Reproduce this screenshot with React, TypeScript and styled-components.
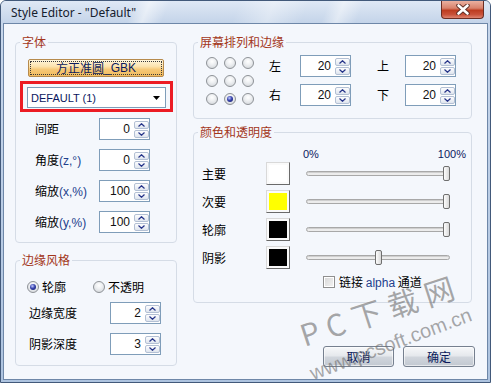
import React from "react";
import styled, { createGlobalStyle } from "styled-components";

const CJK = `"Noto Sans CJK SC", "Noto Sans", sans-serif`;
const LATIN = `"Liberation Sans", "Noto Sans CJK SC", sans-serif`;

const GlobalStyle = createGlobalStyle`
  html, body {
    margin: 0;
    padding: 0;
    background: #ffffff;
  }
  body {
    width: 491px;
    height: 383px;
    overflow: hidden;
    font-family: ${CJK};
  }
`;

// window chrome
const Frame = styled.div`
  position: relative;
  box-sizing: border-box;
  width: 491px;
  height: 383px;
  display: flex;
  flex-direction: column;
  padding: 0 2px 2px;
  border: 1px solid #42597a;
  border-radius: 6px 6px 0 0;
  background: linear-gradient(#c9d8ec, #adc3df);
  overflow: hidden;
`;

const TitleBar = styled.div`
  height: 22px;
  margin: 0 -2px;
  padding: 0 6px 0 10px;
  display: flex;
  justify-content: space-between;
  align-items: flex-start;
  background:
    linear-gradient(
      112deg,
      transparent 0 27%,
      rgba(255, 255, 255, 0.5) 30%,
      transparent 34%,
      transparent 48%,
      rgba(255, 255, 255, 0.35) 55%,
      transparent 62%,
      transparent 66%,
      rgba(255, 255, 255, 0.45) 69%,
      transparent 73%
    ),
    linear-gradient(#dfe8f5, #c4d4e9);
`;

const Title = styled.span`
  padding-top: 4px;
  font: 12px/16px "Noto Sans", sans-serif;
  color: #15202e;
`;

const CloseButton = styled.div`
  box-sizing: border-box;
  width: 43px;
  height: 18px;
  border: 1px solid #6b2d23;
  border-top: none;
  border-radius: 0 0 4px 4px;
  background: linear-gradient(#eab0a0 0%, #d8826c 42%, #bd3c20 55%, #c9523a 80%, #de8470 100%);
  display: flex;
  align-items: center;
  justify-content: center;
`;

const Client = styled.div`
  flex: 1;
  min-height: 0;
  display: flex;
  gap: 16px;
  padding: 11px 12px 12px 11px;
  border: 1px solid #6e87a8;
  background: #f4f7fc;
`;

const Column = styled.div<{ $width?: number }>`
  display: flex;
  flex-direction: column;
  width: ${(p) => (p.$width ? `${p.$width}px` : "auto")};
  flex: ${(p) => (p.$width ? "none" : "1")};
`;

// group boxes
const Group = styled.fieldset<{ $gap?: number; $right?: number }>`
  margin: ${(p) => p.$gap ?? 0}px ${(p) => p.$right ?? 0}px 0 0;
  padding: 0;
  min-width: 0;
  border: 1px solid #d5dce6;
  border-radius: 4px;
`;

const Legend = styled.legend`
  margin-left: 4px;
  padding: 0 2px;
  font: 12px/14px ${CJK};
  color: #a3361a;
`;

const Body = styled.div<{ $pad: string }>`
  padding: ${(p) => p.$pad};
  display: flex;
  flex-direction: column;
`;

const Latin = styled.span`
  font-family: ${LATIN};
  color: #22408c;
`;

// font group
const FontButton = styled.div`
  position: relative;
  box-sizing: border-box;
  width: 136px;
  height: 18px;
  margin-left: 12px;
  border: 1px solid #b68a4c;
  border-radius: 2px;
  background: linear-gradient(#fff6dd 0%, #fce3ae 40%, #f6c877 60%, #f1bb5e 100%);
  display: flex;
  align-items: center;
  justify-content: center;
  font: 12px/16px ${CJK};
  color: #0b1b5e;

  &::after {
    content: "";
    position: absolute;
    inset: 1px;
    border: 1px dotted #3a3a3a;
  }
`;

const Highlight = styled.div`
  box-sizing: border-box;
  width: 153px;
  height: 31px;
  margin: 4px 0 0 4px;
  padding: 3px 4px 1px;
  border: 3px solid #ec1c24;
`;

const Combo = styled.div`
  box-sizing: border-box;
  height: 21px;
  padding: 0 5px 0 3px;
  border: 1px solid #7f9db9;
  background: #ffffff;
  display: flex;
  align-items: center;
  justify-content: space-between;
  font: 11px/14px ${LATIN};
  color: #0b1760;
`;

const FieldRow = styled.div<{ $indent: number; $top: number }>`
  display: flex;
  align-items: center;
  margin: ${(p) => p.$top}px 0 0 ${(p) => p.$indent}px;
`;

const FieldLabel = styled.span<{ $width: number }>`
  width: ${(p) => p.$width}px;
  flex: none;
  font: 12px/16px ${CJK};
  color: #000000;
  white-space: nowrap;
`;

// spin boxes
const SpinFrame = styled.div`
  box-sizing: border-box;
  width: 51px;
  height: 22px;
  display: flex;
  border: 1px solid #7f9db9;
  background: #ffffff;
`;

const SpinValue = styled.span`
  flex: 1;
  padding-right: 4px;
  text-align: right;
  font: 12px/20px ${LATIN};
  color: #111111;
`;

const SpinButtons = styled.div`
  width: 15px;
  padding: 2px 0 1px;
  display: flex;
  flex-direction: column;
  gap: 1px;
`;

const SpinButton = styled.div`
  box-sizing: border-box;
  height: 8px;
  border: 1px solid #b3c0d4;
  border-radius: 2px;
  background: linear-gradient(#fdfdfe, #dfe5ee);
  display: flex;
  align-items: center;
  justify-content: center;
`;

const Chevron = ({ up }: { up?: boolean }) => (
  <svg width="7" height="4" viewBox="0 0 7 4">
    <polyline
      points={up ? "0.5,3.5 3.5,0.7 6.5,3.5" : "0.5,0.5 3.5,3.3 6.5,0.5"}
      fill="none"
      stroke="#28368a"
      strokeWidth="1.2"
    />
  </svg>
);

const Spin = ({ value }: { value: number }) => (
  <SpinFrame>
    <SpinValue>{value}</SpinValue>
    <SpinButtons>
      <SpinButton>
        <Chevron up />
      </SpinButton>
      <SpinButton>
        <Chevron />
      </SpinButton>
    </SpinButtons>
  </SpinFrame>
);

// radios and checkbox
const RadioDot = styled.span<{ $on?: boolean }>`
  box-sizing: border-box;
  width: 12px;
  height: 12px;
  flex: none;
  border-radius: 50%;
  border: 1px solid #8e9297;
  background: radial-gradient(circle at 50% 35%, #ffffff 0, #eef0f2 40%, #cdd1d6 100%);
  display: inline-flex;
  align-items: center;
  justify-content: center;

  &::after {
    content: "";
    display: ${(p) => (p.$on ? "block" : "none")};
    width: 6px;
    height: 6px;
    border-radius: 50%;
    background: radial-gradient(circle at 40% 35%, #c3cbff 0, #3743ad 45%, #10175e 100%);
  }
`;

const RadioOption = styled.label<{ $width?: number }>`
  display: flex;
  align-items: center;
  gap: 3px;
  width: ${(p) => (p.$width ? `${p.$width}px` : "auto")};
  font: 12px/14px ${CJK};
  color: #000000;
`;

const RadioGrid = styled.div`
  display: grid;
  grid-template-columns: repeat(3, 12px);
  gap: 6px;
  margin-top: 2px;
  align-self: flex-start;
`;

const CheckBox = styled.span`
  box-sizing: border-box;
  width: 12px;
  height: 12px;
  flex: none;
  border: 1px solid #8f8f8f;
  background: linear-gradient(135deg, #d6d6d6, #f4f4f4);
  box-shadow: inset 0 0 0 1px #ffffff;
`;

// screen margins group
const MarginsRow = styled.div`
  display: flex;
  padding: 6px 0 12px 12px;
  gap: 15px;
`;

const MarginGrid = styled.div`
  display: flex;
  flex-direction: column;
  gap: 7px;
`;

const MarginPair = styled.div`
  display: flex;
  gap: 26px;
`;

// colour group
const PercentHeader = styled.div`
  display: flex;
  justify-content: space-between;
  margin: 0 5px 0 109px;
  font: 11px/12px ${LATIN};
  color: #0b1760;
`;

const ColorRow = styled.div<{ $top: number }>`
  display: flex;
  align-items: center;
  height: 23px;
  margin-top: ${(p) => p.$top}px;
  padding-left: 8px;
`;

const Swatch = styled.div<{ $color: string }>`
  box-sizing: border-box;
  width: 24px;
  height: 23px;
  flex: none;
  padding: 2px;
  border: 1px solid;
  border-color: #d9d9d9 #6a6a6a #6a6a6a #d9d9d9;
  background: #fafafa;

  &::before {
    content: "";
    display: block;
    width: 100%;
    height: 100%;
    background: ${(p) => p.$color};
  }
`;

const Slider = styled.div`
  position: relative;
  width: 144px;
  height: 23px;
  margin-left: 16px;
  display: flex;
  align-items: center;
`;

const Track = styled.div`
  box-sizing: border-box;
  width: 100%;
  height: 5px;
  border: 1px solid #a8a8a8;
  border-radius: 3px;
  background: #ececec;
  box-shadow: inset 0 1px 0 #cfcfcf;
`;

const Thumb = styled.div`
  position: absolute;
  top: 4px;
  box-sizing: border-box;
  width: 7px;
  height: 15px;
  border: 1px solid #6f6f6f;
  border-radius: 2px;
  background: linear-gradient(to right, #fdfdfd, #d9d9d9);
`;

const CheckRow = styled.label`
  display: flex;
  align-items: center;
  gap: 4px;
  margin-top: 7px;
  padding-left: 129px;
  height: 12px;
  font: 12px/14px ${CJK};
  color: #000000;
`;

// dialog buttons
const ButtonRow = styled.div`
  margin-top: auto;
  display: flex;
  justify-content: flex-end;
  gap: 9px;
`;

const DialogButton = styled.div<{ $width: number }>`
  box-sizing: border-box;
  width: ${(p) => p.$width}px;
  height: 21px;
  border: 1px solid #76808f;
  border-radius: 3px;
  background: linear-gradient(#f7f8fa 0%, #e6e9ed 45%, #d0d5dc 55%, #c2c8d1 100%);
  box-shadow: inset 0 0 0 1px rgba(255, 255, 255, 0.6);
  display: flex;
  align-items: center;
  justify-content: center;
  font: 12px/16px ${CJK};
  color: #0c1a5c;
`;

// watermark drawn over the dialog
const Watermark = styled.div<{ $left: number; $top: number; $angle: number; $size: number }>`
  position: absolute;
  left: ${(p) => p.$left}px;
  top: ${(p) => p.$top}px;
  transform: rotate(${(p) => p.$angle}deg);
  transform-origin: 0 100%;
  font-size: ${(p) => p.$size}px;
  line-height: 1;
  white-space: nowrap;
  color: rgba(110, 110, 110, 0.6);
  pointer-events: none;
`;

const fontRows = [
  { label: "间距", unit: "", value: 0 },
  { label: "角度", unit: "(z,°)", value: 0 },
  { label: "缩放", unit: "(x,%)", value: 100 },
  { label: "缩放", unit: "(y,%)", value: 100 },
];

const colorRows = [
  { label: "主要", color: "#ffffff", alpha: 1 },
  { label: "次要", color: "#ffff00", alpha: 1 },
  { label: "轮廓", color: "#000000", alpha: 1 },
  { label: "阴影", color: "#000000", alpha: 0.5 },
];

const App = () => {
  return (
    <>
      <GlobalStyle />
      <Frame>
        <TitleBar>
          <Title>Style Editor - "Default"</Title>
          <CloseButton>
            <svg width="14" height="11" viewBox="0 0 14 11">
              <path d="M2.5 1.5 L11.5 9.5 M11.5 1.5 L2.5 9.5" stroke="#5b2c24" strokeWidth="4.4" strokeLinecap="round" />
              <path d="M2.5 1.5 L11.5 9.5 M11.5 1.5 L2.5 9.5" stroke="#ffffff" strokeWidth="2.6" strokeLinecap="round" />
            </svg>
          </CloseButton>
        </TitleBar>

        <Client>
          <Column $width={162}>
            <Group>
              <Legend>字体</Legend>
              <Body $pad="10px 0 9px">
                <FontButton>
                  方正准圆<span style={{ fontFamily: LATIN }}>_GBK</span>
                </FontButton>
                <Highlight>
                  <Combo>
                    <span>DEFAULT (1)</span>
                    <svg width="7" height="4" viewBox="0 0 7 4">
                      <polygon points="0,0 7,0 3.5,4" fill="#000" />
                    </svg>
                  </Combo>
                </Highlight>
                {fontRows.map((row, i) => (
                  <FieldRow key={i} $indent={19} $top={i === 0 ? 6 : 9}>
                    <FieldLabel $width={64}>
                      {row.label}
                      {row.unit && <Latin>{row.unit}</Latin>}
                    </FieldLabel>
                    <Spin value={row.value} />
                  </FieldRow>
                ))}
              </Body>
            </Group>

            <Group $gap={10}>
              <Legend>边缘风格</Legend>
              <Body $pad="13px 0 10px">
                <FieldRow $indent={11} $top={0}>
                  <RadioOption $width={66}>
                    <RadioDot $on />
                    轮廓
                  </RadioOption>
                  <RadioOption>
                    <RadioDot />
                    不透明
                  </RadioOption>
                </FieldRow>
                <FieldRow $indent={13} $top={8}>
                  <FieldLabel $width={81}>边缘宽度</FieldLabel>
                  <Spin value={2} />
                </FieldRow>
                <FieldRow $indent={13} $top={9}>
                  <FieldLabel $width={81}>阴影深度</FieldLabel>
                  <Spin value={3} />
                </FieldRow>
              </Body>
            </Group>
          </Column>

          <Column>
            <Group $right={3}>
              <Legend>屏幕排列和边缘</Legend>
              <MarginsRow>
                <RadioGrid>
                  {Array.from({ length: 9 }).map((_, i) => (
                    <RadioDot key={i} $on={i === 7} />
                  ))}
                </RadioGrid>
                <MarginGrid>
                  <MarginPair>
                    <FieldRow $indent={0} $top={0}>
                      <FieldLabel $width={31}>左</FieldLabel>
                      <Spin value={20} />
                    </FieldRow>
                    <FieldRow $indent={0} $top={0}>
                      <FieldLabel $width={28}>上</FieldLabel>
                      <Spin value={20} />
                    </FieldRow>
                  </MarginPair>
                  <MarginPair>
                    <FieldRow $indent={0} $top={0}>
                      <FieldLabel $width={31}>右</FieldLabel>
                      <Spin value={20} />
                    </FieldRow>
                    <FieldRow $indent={0} $top={0}>
                      <FieldLabel $width={28}>下</FieldLabel>
                      <Spin value={20} />
                    </FieldRow>
                  </MarginPair>
                </MarginGrid>
              </MarginsRow>
            </Group>

            <Group $gap={6} $right={3}>
              <Legend>颜色和透明度</Legend>
              <Body $pad="9px 0 14px">
                <PercentHeader>
                  <span>0%</span>
                  <span>100%</span>
                </PercentHeader>
                {colorRows.map((row, i) => (
                  <ColorRow key={i} $top={i === 0 ? 2 : 5}>
                    <FieldLabel $width={64}>{row.label}</FieldLabel>
                    <Swatch $color={row.color} />
                    <Slider>
                      <Track />
                      <Thumb style={{ left: Math.round(row.alpha * 137) }} />
                    </Slider>
                  </ColorRow>
                ))}
                <CheckRow>
                  <CheckBox />
                  <span>
                    链接 <Latin>alpha</Latin> 通道
                  </span>
                </CheckRow>
              </Body>
            </Group>

            <ButtonRow>
              <DialogButton $width={71}>取消</DialogButton>
              <DialogButton $width={72}>确定</DialogButton>
            </ButtonRow>
          </Column>
        </Client>

        <Watermark $left={304} $top={318} $angle={-18} $size={30} style={{ fontFamily: CJK, letterSpacing: 8 }}>
          PC下载网
        </Watermark>
        <Watermark $left={313} $top={362} $angle={-20.5} $size={20} style={{ fontFamily: LATIN }}>
          www.pcsoft.com.cn
        </Watermark>
      </Frame>
    </>
  );
};

export default App;
